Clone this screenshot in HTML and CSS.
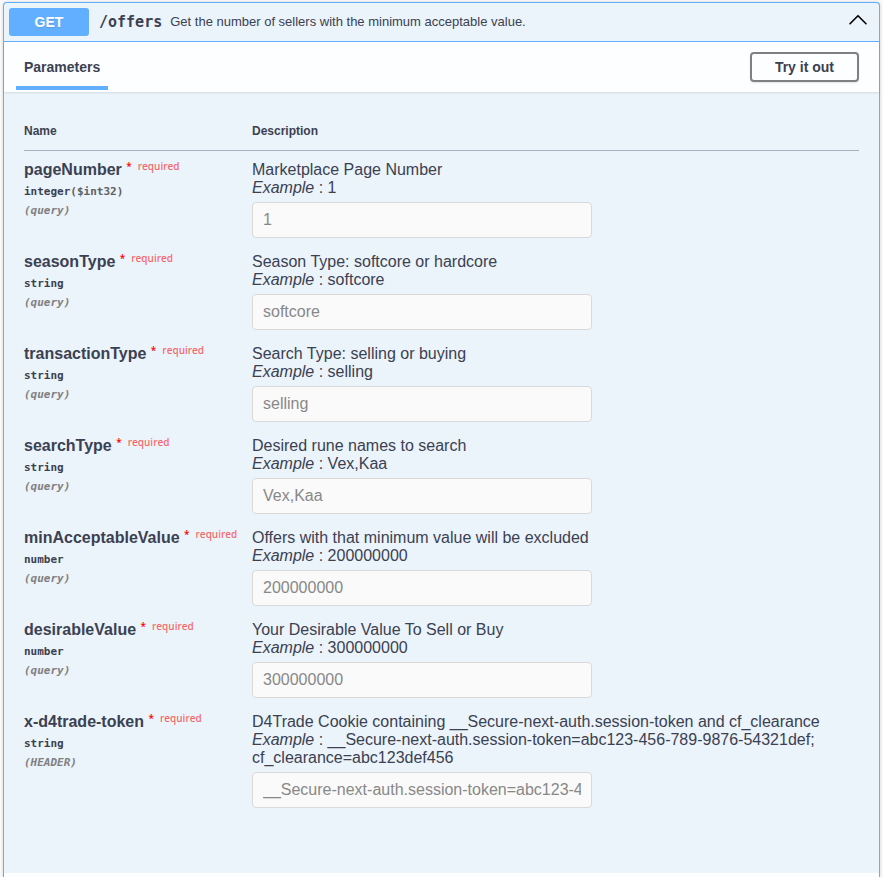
FILE: index.html
```html
<!DOCTYPE html>
<html lang="en">
<head>
<meta charset="utf-8">
<meta name="viewport" content="width=device-width, initial-scale=1">
<title>GET /offers</title>
<link rel="stylesheet" href="styles.css">
</head>
<body>
<main class="opblock">
  <header class="summary">
    <button class="summary-control" type="button" aria-expanded="true">
      <span class="method">GET</span>
      <span class="path">/offers</span>
      <span class="summary-text">Get the number of sellers with the minimum acceptable value.</span>
      <svg class="arrow" viewBox="0 0 20 20" width="20" height="20" aria-hidden="true"><path d="M2 11.7 10 3.7l8 8" fill="none" stroke="#000" stroke-width="1.6" stroke-linecap="round" stroke-linejoin="round"/></svg>
    </button>
  </header>
  <div class="section-header">
    <h4 class="tab">Parameters</h4>
    <button class="try-out" type="button">Try it out</button>
  </div>
  <div class="table-container">
    <table class="parameters">
      <thead>
        <tr><th class="col-name" scope="col">Name</th><th scope="col">Description</th></tr>
      </thead>
      <tbody>
        <tr>
          <td>
            <label class="name" for="pageNumber">pageNumber <span class="star">*</span><span class="required">required</span></label>
            <div class="type">integer<span class="format">($int32)</span></div>
            <div class="in">(query)</div>
          </td>
          <td>
            <p>Marketplace Page Number</p>
            <p><i>Example</i> : 1</p>
            <input id="pageNumber" type="text" value="1" disabled>
          </td>
        </tr>
        <tr>
          <td>
            <label class="name" for="seasonType">seasonType <span class="star">*</span><span class="required">required</span></label>
            <div class="type">string</div>
            <div class="in">(query)</div>
          </td>
          <td>
            <p>Season Type: softcore or hardcore</p>
            <p><i>Example</i> : softcore</p>
            <input id="seasonType" type="text" value="softcore" disabled>
          </td>
        </tr>
        <tr>
          <td>
            <label class="name" for="transactionType">transactionType <span class="star">*</span><span class="required">required</span></label>
            <div class="type">string</div>
            <div class="in">(query)</div>
          </td>
          <td>
            <p>Search Type: selling or buying</p>
            <p><i>Example</i> : selling</p>
            <input id="transactionType" type="text" value="selling" disabled>
          </td>
        </tr>
        <tr>
          <td>
            <label class="name" for="searchType">searchType <span class="star">*</span><span class="required">required</span></label>
            <div class="type">string</div>
            <div class="in">(query)</div>
          </td>
          <td>
            <p>Desired rune names to search</p>
            <p><i>Example</i> : Vex,Kaa</p>
            <input id="searchType" type="text" value="Vex,Kaa" disabled>
          </td>
        </tr>
        <tr>
          <td>
            <label class="name" for="minAcceptableValue">minAcceptableValue <span class="star">*</span><span class="required">required</span></label>
            <div class="type">number</div>
            <div class="in">(query)</div>
          </td>
          <td>
            <p>Offers with that minimum value will be excluded</p>
            <p><i>Example</i> : 200000000</p>
            <input id="minAcceptableValue" type="text" value="200000000" disabled>
          </td>
        </tr>
        <tr>
          <td>
            <label class="name" for="desirableValue">desirableValue <span class="star">*</span><span class="required">required</span></label>
            <div class="type">number</div>
            <div class="in">(query)</div>
          </td>
          <td>
            <p>Your Desirable Value To Sell or Buy</p>
            <p><i>Example</i> : 300000000</p>
            <input id="desirableValue" type="text" value="300000000" disabled>
          </td>
        </tr>
        <tr>
          <td>
            <label class="name" for="token">x-d4trade-token <span class="star">*</span><span class="required">required</span></label>
            <div class="type">string</div>
            <div class="in">(HEADER)</div>
          </td>
          <td>
            <p>D4Trade Cookie containing __Secure-next-auth.session-token and cf_clearance</p>
            <p><i>Example</i> : __Secure-next-auth.session-token=abc123-456-789-9876-54321def; cf_clearance=abc123def456</p>
            <input id="token" type="text" value="__Secure-next-auth.session-token=abc123-456-789-9876-54321def; cf_clearance=abc123def456" disabled>
          </td>
        </tr>
      </tbody>
    </table>
  </div>
  <div class="responses"></div>
</main>
</body>
</html>
```

FILE: styles.css
```css
* {
  box-sizing: border-box;
}

body {
  display: flex;
  min-height: 100vh;
  margin: 0;
  padding: 2px 3px 0;
  background: #fafafa;
  color: #3b4151;
  font-family: "Liberation Sans", Arial, sans-serif;
  font-size: 16px;
  line-height: 18px;
}

.opblock {
  display: flex;
  flex: 1;
  flex-direction: column;
  min-width: 0;
  border: 1px solid #61affe;
  border-bottom: 0;
  border-radius: 4px 4px 0 0;
  background: #ebf3fb;
  box-shadow: 0 0 3px rgba(0, 0, 0, 0.19);
}

.summary {
  border-bottom: 1px solid #61affe;
}

.summary-control {
  display: flex;
  align-items: center;
  width: 100%;
  padding: 5px 11px 5px 5px;
  border: 0;
  background: none;
  color: inherit;
  font: inherit;
  text-align: left;
}

.method {
  width: 80px;
  border-radius: 3px;
  background: #61affe;
  color: #fff;
  font-size: 14px;
  font-weight: 700;
  line-height: 28px;
  text-align: center;
  text-shadow: 0 1px 0 rgba(0, 0, 0, 0.1);
}

.path {
  padding: 0 8px 0 10px;
  font-family: "DejaVu Sans Mono", monospace;
  font-size: 15px;
  font-weight: 700;
}

.summary-text {
  flex: 1;
  font-size: 13px;
}

.arrow {
  flex: none;
}

.section-header {
  display: flex;
  position: relative;
  align-items: center;
  justify-content: space-between;
  height: 50px;
  padding: 0 20px 0 12px;
  background: rgba(255, 255, 255, 0.9);
  box-shadow: 0 1px 2px rgba(0, 0, 0, 0.1);
}

.tab {
  align-self: stretch;
  margin: 0 0 2px;
  padding: 0 8px;
  border-bottom: 4px solid #61affe;
  font-size: 14px;
  line-height: 50px;
}

.try-out {
  padding: 0 23px;
  border: 2px solid gray;
  border-radius: 4px;
  background: transparent;
  box-shadow: 0 1px 2px rgba(0, 0, 0, 0.1);
  color: #3b4151;
  font: 700 14px/26px "Liberation Sans", Arial, sans-serif;
}

.table-container {
  padding: 20px 20px 60px;
}

.parameters {
  width: 100%;
  border-collapse: separate;
  border-spacing: 0;
  table-layout: fixed;
}

.parameters th {
  padding: 10px 0;
  border-bottom: 1px solid #a9b1c1;
  font-size: 12px;
  text-align: left;
}

.parameters .col-name {
  width: 228px;
}

.parameters td {
  padding: 10px 0 5px;
  vertical-align: top;
}

.parameters p {
  margin: 0;
}

.parameters input {
  display: block;
  width: 340px;
  max-width: 100%;
  height: 36px;
  margin-top: 5px;
  padding: 0 10px;
  border: 1px solid #d9d9d9;
  border-radius: 4px;
  background: #fafafa;
  color: #888;
  font: inherit;
}

.name {
  display: flex;
  font-weight: 700;
  white-space: pre;
}

.star,
.required {
  font-family: "Open Sans", sans-serif;
  font-size: 10px;
  font-weight: 600;
  line-height: 10px;
}

.star {
  color: #f00;
}

.required {
  padding-left: 6px;
  color: rgba(255, 0, 0, 0.6);
}

.type,
.in {
  font-family: "DejaVu Sans Mono", monospace;
  font-size: 11px;
  font-weight: 700;
}

.type {
  padding: 4px 0 1px;
}

.format {
  color: #606060;
}

.in {
  color: gray;
  font-style: italic;
}

.responses {
  flex: 1;
  min-height: 4px;
  background: rgba(255, 255, 255, 0.9);
}
```
